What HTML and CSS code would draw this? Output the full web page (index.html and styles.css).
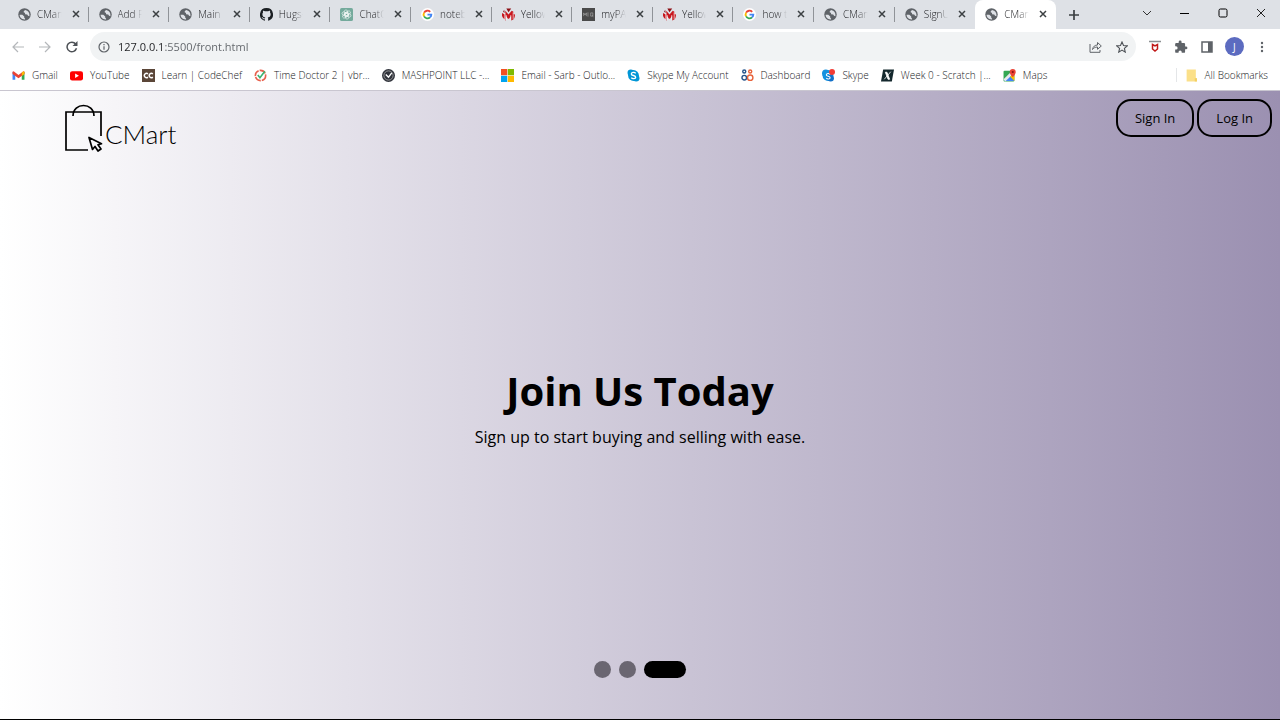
FILE: index.html
```html
<!DOCTYPE html>
<html lang="en">
<head>
    <meta charset="UTF-8">
    <meta name="viewport" content="width=device-width, initial-scale=1.0">
    <title>CMart</title>
    <link rel="stylesheet" href="styles.css">
</head>
<body>
    <!-- Shared icons -->
    <svg class="sprite" aria-hidden="true">
        <symbol id="globe" viewBox="0 0 24 24"><circle cx="12" cy="12" r="11.500" fill="#5f6368"/><path d="M3 12.500h5l3.500 3v2.500l1.500 1.500V21C7 21.500 3 17.500 3 12.500z" fill="#dee1e6"/><path d="M13 3.500c-1 1-3 2-2.500 4.500l2.500 1v2.500l4 .5 1.500 2.500 2.500.500c1-5-2-9.500-5.500-10.500z" fill="#dee1e6"/></symbol>
        <symbol id="close" viewBox="0 0 8 8"><path d="M1 1l6 6M7 1L1 7" stroke="#3c4043" stroke-width="1.500"/></symbol>
        <symbol id="google" viewBox="0 0 24 24"><circle cx="12" cy="12" r="12" fill="#fff"/><g fill="none" stroke-width="3.400"><path d="M17 7a7.200 7.200 0 0 0-11.300 1.600" stroke="#ea4335"/><path d="M5.700 8.600a7.200 7.200 0 0 0 0 6.800" stroke="#fbbc05"/><path d="M5.700 15.400a7.200 7.200 0 0 0 11 2" stroke="#34a853"/><path d="M16.700 17.400a7 7 0 0 0 2.400-5.300H12" stroke="#4285f4"/></g></symbol>
        <symbol id="yellow" viewBox="0 0 24 24"><path d="M0 9l5 3v9C1 19-1 14 0 9z" fill="#c8171e"/><path d="M6 5l6 7 6-7 3 2v14l-4 2V14l-4 6h-2l-4-6v9H6z" fill="#c8171e"/><path d="M21 11l3 1c0 4-1 7-3 9z" fill="#c8171e"/><path d="M8 1l4 7 5-7zM2 7l2-4 1 6z" fill="#8e1015"/><path d="M5.500 9v13M20.500 8v13M8 13v9M16 13v9" stroke="#fff" stroke-width="1"/></symbol>
    </svg>

    <div class="browser">
        <div class="tab-bar">
            <div class="tabs">
                <div class="tab"><svg class="icon"><use href="#globe"/></svg><span class="tab-title">CMart</span><button class="tab-close" aria-label="Close tab"><svg><use href="#close"/></svg></button></div>
                <div class="tab"><svg class="icon"><use href="#globe"/></svg><span class="tab-title">Add Pr</span><button class="tab-close" aria-label="Close tab"><svg><use href="#close"/></svg></button></div>
                <div class="tab"><svg class="icon"><use href="#globe"/></svg><span class="tab-title">Main</span><button class="tab-close" aria-label="Close tab"><svg><use href="#close"/></svg></button></div>
                <div class="tab"><svg class="icon" viewBox="0 0 16 16"><path d="M8 0a8 8 0 0 0-2.530 15.590c.4.070.55-.17.55-.38v-1.490c-2.010.37-2.530-.49-2.690-.94-.09-.23-.48-.94-.82-1.130-.28-.15-.68-.52-.01-.53.63-.01 1.080.58 1.230.82.72 1.210 1.870.87 2.330.66.07-.52.28-.87.51-1.070-1.780-.2-3.640-.89-3.640-3.950 0-.87.31-1.590.82-2.150-.08-.2-.36-1.020.08-2.120 0 0 .67-.21 2.200.82a7.600 7.600 0 0 1 4 0c1.530-1.040 2.200-.82 2.200-.82.44 1.100.16 1.920.08 2.120.51.56.82 1.270.82 2.150 0 3.070-1.870 3.750-3.650 3.950.29.25.54.73.54 1.480v2.200c0 .21.15.46.55.38A8 8 0 0 0 8 0z" fill="#1b1f23"/></svg><span class="tab-title">Hugs-</span><button class="tab-close" aria-label="Close tab"><svg><use href="#close"/></svg></button></div>
                <div class="tab"><svg class="icon" viewBox="0 0 24 24"><rect width="24" height="24" rx="3" fill="#74aa9c"/><g fill="none" stroke="#fff" stroke-width="1"><rect x="8" y="3.500" width="6" height="12" rx="3"/><rect x="8" y="3.500" width="6" height="12" rx="3" transform="rotate(60 12 12)"/><rect x="8" y="3.500" width="6" height="12" rx="3" transform="rotate(120 12 12)"/><rect x="8" y="3.500" width="6" height="12" rx="3" transform="rotate(180 12 12)"/><rect x="8" y="3.500" width="6" height="12" rx="3" transform="rotate(240 12 12)"/><rect x="8" y="3.500" width="6" height="12" rx="3" transform="rotate(300 12 12)"/></g></svg><span class="tab-title">ChatG</span><button class="tab-close" aria-label="Close tab"><svg><use href="#close"/></svg></button></div>
                <div class="tab"><svg class="icon"><use href="#google"/></svg><span class="tab-title">noteb</span><button class="tab-close" aria-label="Close tab"><svg><use href="#close"/></svg></button></div>
                <div class="tab"><svg class="icon"><use href="#yellow"/></svg><span class="tab-title">Yellow</span><button class="tab-close" aria-label="Close tab"><svg><use href="#close"/></svg></button></div>
                <div class="tab"><svg class="icon" viewBox="0 0 24 24"><rect width="24" height="24" fill="#4a4a4a"/><path d="M3 15V9l2.500 4L8 9v6M11 8v8M16 9h4v6h-4zM19 14l2 2" fill="none" stroke="#bbb"/></svg><span class="tab-title">myPA</span><button class="tab-close" aria-label="Close tab"><svg><use href="#close"/></svg></button></div>
                <div class="tab"><svg class="icon"><use href="#yellow"/></svg><span class="tab-title">Yellow</span><button class="tab-close" aria-label="Close tab"><svg><use href="#close"/></svg></button></div>
                <div class="tab"><svg class="icon"><use href="#google"/></svg><span class="tab-title">how t</span><button class="tab-close" aria-label="Close tab"><svg><use href="#close"/></svg></button></div>
                <div class="tab"><svg class="icon"><use href="#globe"/></svg><span class="tab-title">CMart</span><button class="tab-close" aria-label="Close tab"><svg><use href="#close"/></svg></button></div>
                <div class="tab"><svg class="icon"><use href="#globe"/></svg><span class="tab-title">SignU</span><button class="tab-close" aria-label="Close tab"><svg><use href="#close"/></svg></button></div>
                <div class="tab active"><svg class="icon"><use href="#globe"/></svg><span class="tab-title">CMart</span><button class="tab-close" aria-label="Close tab"><svg><use href="#close"/></svg></button></div>
            </div>
            <button class="new-tab" aria-label="New tab"><svg width="12" height="12" viewBox="0 0 12 12"><path d="M6 1v10M1 6h10" stroke="#3c4043" stroke-width="1.700"/></svg></button>
            <div class="window-controls">
                <button aria-label="Search tabs"><svg width="10" height="10" viewBox="0 0 10 10"><path d="M1 3l4 4 4-4" fill="none" stroke="#333"/></svg></button>
                <button aria-label="Minimize"><svg width="10" height="10" viewBox="0 0 10 10"><path d="M0 5.500h9" stroke="#000"/></svg></button>
                <button aria-label="Maximize"><svg width="10" height="10" viewBox="0 0 10 10"><rect x="1" y="1" width="8" height="8" rx="1.500" fill="none" stroke="#000"/></svg></button>
                <button aria-label="Close"><svg width="10" height="10" viewBox="0 0 10 10"><path d="M1 1l8 8M9 1L1 9" stroke="#222"/></svg></button>
            </div>
        </div>

        <div class="toolbar">
            <div class="nav-buttons">
                <button aria-label="Back"><svg width="12" height="12" viewBox="0 0 12 12"><path d="M12 6H1M6 1L1 6l5 5" fill="none" stroke="#b4b7ba" stroke-width="1.200"/></svg></button>
                <button aria-label="Forward"><svg width="12" height="12" viewBox="0 0 12 12"><path d="M0 6h11M6 1l5 5-5 5" fill="none" stroke="#b4b7ba" stroke-width="1.200"/></svg></button>
                <button aria-label="Reload"><svg width="12" height="12" viewBox="0 0 12 12"><path d="M10.500 7.300A4.800 4.800 0 1 1 9.700 3" fill="none" stroke="#4d5156" stroke-width="1.500"/><path d="M11.500 0v5h-5z" fill="#4d5156"/></svg></button>
            </div>
            <div class="address-bar">
                <svg width="12" height="12" viewBox="0 0 12 12"><circle cx="6" cy="6" r="5" fill="none" stroke="#5f6368" stroke-width="1.200"/><path d="M6 5.200v3.500M6 3v1.300" stroke="#5f6368" stroke-width="1.200"/></svg>
                <input type="text" class="url" aria-label="Address" value="127.0.0.1:5500/front.html">
                <button aria-label="Share"><svg width="13" height="12" viewBox="0 0 13 12"><path d="M1 3v8.300h10V9M3.500 8.500C4 5.500 6 4 8.500 4V1.500L12.300 5 8.500 8.300V6C6 6 4.700 7 3.500 8.500z" fill="none" stroke="#5f6368"/></svg></button>
                <button aria-label="Bookmark this page"><svg width="12" height="12" viewBox="0 0 24 24"><path d="M12 2l3 7 7.500.7-5.700 5 1.700 7.500L12 18.200 5.500 22.200l1.700-7.500-5.700-5L9 9z" fill="none" stroke="#4d5156" stroke-width="2.200"/></svg></button>
            </div>
            <div class="extensions">
                <button aria-label="McAfee"><svg width="14" height="14" viewBox="0 0 14 14"><path d="M1 1.500h12" stroke="#8b8f92" stroke-width="1.500"/><path d="M4.500 4.500L7 6l2.500-1.500v4.500L7 11 4.500 9z" fill="#fff" stroke="#c01818" stroke-width="1.500"/></svg></button>
                <button aria-label="Extensions"><svg width="14" height="14" viewBox="0 0 24 24"><path d="M20.500 11H19V7a2 2 0 0 0-2-2h-4V3.500a2.500 2.500 0 0 0-5 0V5H4a2 2 0 0 0-2 2v3.800h1.500a2.700 2.700 0 0 1 0 5.400H2V20a2 2 0 0 0 2 2h3.800v-1.500a2.700 2.700 0 0 1 5.400 0V22H17a2 2 0 0 0 2-2v-4h1.500a2.500 2.500 0 0 0 0-5z" fill="#5f6368"/></svg></button>
                <button aria-label="Side panel"><svg width="12" height="12" viewBox="0 0 12 12"><path d="M1 1h10v10H1z" fill="none" stroke="#5f6368" stroke-width="1.500"/><path d="M7 1h4v10H7z" fill="#5f6368"/></svg></button>
                <button class="profile">J</button>
                <button aria-label="Menu"><svg width="12" height="12" viewBox="0 0 12 12" fill="#5f6368"><circle cx="6" cy="2" r="1.200"/><circle cx="6" cy="6" r="1.200"/><circle cx="6" cy="10" r="1.200"/></svg></button>
            </div>
        </div>

        <nav class="bookmarks">
            <a href="#"><svg class="icon" viewBox="0 0 24 24"><path d="M1 5v15h5V9z" fill="#4285f4"/><path d="M18 9v11h5V5z" fill="#34a853"/><path d="M1 5l2-1 9 7 9-7 2 1v4l-11 8L1 9z" fill="#ea4335"/><path d="M18 7l3-3 2 1v4l-5 4z" fill="#fbbc04"/></svg>Gmail</a>
            <a href="#"><svg class="icon" viewBox="0 0 24 24"><rect y="4" width="24" height="17" rx="4" fill="#f00"/><path d="M9.500 8.500v8l7-4z" fill="#fff"/></svg>YouTube</a>
            <a href="#"><svg class="icon" viewBox="0 0 24 24"><rect width="24" height="24" fill="#5b4638"/><path d="M11 9a4 4 0 1 0 0 6M20 9a4 4 0 1 0 0 6" fill="none" stroke="#fff" stroke-width="2.600"/></svg>Learn | CodeChef</a>
            <a href="#"><svg class="icon" viewBox="0 0 24 24"><circle cx="12" cy="12" r="9.500" fill="none" stroke="#e8604c" stroke-width="3" stroke-dasharray="12 2"/><path d="M7 11l4 5 9-12" fill="none" stroke="#3cb371" stroke-width="3"/></svg>Time Doctor 2 | vbr...</a>
            <a href="#"><svg class="icon" viewBox="0 0 24 24"><circle cx="12" cy="12" r="12" fill="#30333b"/><circle cx="12" cy="12" r="8.500" fill="none" stroke="#aaa" stroke-width="1.500"/><path d="M7 10l5 5 6-8" fill="none" stroke="#fff" stroke-width="2.500"/></svg>MASHPOINT LLC -...</a>
            <a href="#"><svg class="icon" viewBox="0 0 24 24"><path d="M0 0h11.500v11.500H0z" fill="#f25022"/><path d="M12.500 0H24v11.500H12.500z" fill="#7fba00"/><path d="M0 12.500h11.500V24H0z" fill="#00a4ef"/><path d="M12.500 12.500H24V24H12.500z" fill="#ffb900"/></svg>Email - Sarb - Outlo...</a>
            <a href="#"><svg class="icon" viewBox="0 0 24 24"><circle cx="12" cy="12" r="10" fill="#0096d6"/><circle cx="7" cy="7" r="6" fill="#0096d6"/><circle cx="17" cy="17" r="6" fill="#0096d6"/><path d="M16 8c-2-3-8-2-8 1 0 4 8 2 8 6 0 3-6 4-8 1" fill="none" stroke="#fff" stroke-width="2.500"/></svg>Skype My Account</a>
            <a href="#"><svg class="icon" viewBox="0 0 24 24" fill="none" stroke-width="2.600"><g stroke="#27558c"><circle cx="6" cy="4.500" r="2.800"/><circle cx="6" cy="16" r="4.200"/></g><g stroke="#e8623a"><circle cx="17" cy="4.500" r="2.800"/><circle cx="17" cy="16" r="5"/></g></svg>Dashboard</a>
            <a href="#"><svg class="icon" viewBox="0 0 24 24"><circle cx="11" cy="12" r="10" fill="#1592df"/><circle cx="7" cy="8" r="7" fill="#1592df"/><circle cx="16" cy="17" r="6" fill="#1270c8"/><path d="M15 10c-2-3-7-2-7 1 0 3 7 2 7 5s-5 3-7 1" fill="none" stroke="#fff" stroke-width="2"/><circle cx="18.500" cy="5.500" r="5.500" fill="#f23c34"/></svg>Skype</a>
            <a href="#"><svg class="icon" viewBox="0 0 24 24"><path d="M4 1h20l-4 22H0z" fill="#14282d"/><path d="M8 6h3l5 13h-3zM18 5L6 19" fill="#fff" stroke="#fff" stroke-width="1.500"/></svg>Week 0 - Scratch |...</a>
            <a href="#"><svg class="icon" viewBox="0 0 24 24"><rect x="1" y="3" width="20" height="20" rx="2" fill="#34a853"/><path d="M2 22l10-10 9 10z" fill="#4285f4"/><path d="M1 19L17 3h4v4L4 23z" fill="#e5e8eb"/><path d="M13 14l8 8V9z" fill="#fbbc04"/><path d="M18 0a5.500 5.500 0 0 1 5.500 5.500C23.500 10 18 15 18 15s-5.500-5-5.500-9.500A5.500 5.500 0 0 1 18 0z" fill="#ea4335"/><circle cx="18" cy="5.500" r="2" fill="#811"/></svg>Maps</a>
            <a href="#" class="all-bookmarks"><svg class="icon" viewBox="0 0 24 24"><path d="M3 1h17v16h2v6H3z" fill="#fbe089"/><path d="M18 17h4v6h-4z" fill="#f3cf62"/></svg>All Bookmarks</a>
        </nav>
    </div>

    <main class="page">
        <header class="header">
            <a href="#" class="logo">
                <svg width="40" height="50" viewBox="0 0 40 50" fill="none" stroke="#000" stroke-width="1.700"><path d="M24 47H2V9h35V33"/><path d="M9 13C9 -1 30 -1 30 13"/><path d="M25 34.500l3.500 12 2.500-3 3 4.500 3-2-3-4.200 3.500-1z" stroke-linejoin="round"/></svg>
                <span>CMart</span>
            </a>
            <div class="auth-buttons">
                <button class="auth-button">Sign In</button>
                <button class="auth-button">Log In</button>
            </div>
        </header>

        <section class="slide">
            <h1>Join Us Today</h1>
            <p>Sign up to start buying and selling with ease.</p>
        </section>

        <div class="dots">
            <button class="dot" aria-label="Slide 1"></button>
            <button class="dot" aria-label="Slide 2"></button>
            <button class="dot active" aria-label="Slide 3"></button>
        </div>
    </main>
</body>
</html>
```

FILE: styles.css
```css
* {
    box-sizing: border-box;
}
body {
    margin: 0;
    min-height: 100vh;
    display: flex;
    flex-direction: column;
    font-family: "Open Sans", sans-serif;
    color: #000;
}
button {
    display: flex;
    align-items: center;
    justify-content: center;
    padding: 0;
    border: none;
    background: none;
    font-family: inherit;
    cursor: pointer;
}
a {
    color: inherit;
    text-decoration: none;
}
.sprite {
    display: none;
}
.icon {
    width: 13px;
    height: 13px;
    flex: none;
}

/* Browser window */
.browser {
    background-color: #fff;
    border-bottom: 1px solid #c9c6d0;
    font-size: 10px;
    font-weight: 300;
    color: #202124;
}
.tab-bar {
    display: flex;
    height: 29px;
    padding-left: 8px;
    background-color: #dee1e6;
}
.tabs {
    display: flex;
    flex: 1;
    min-width: 0;
}
.tab {
    display: flex;
    flex: 1;
    align-items: center;
    min-width: 0;
    padding: 0 9px 1px 10px;
    background: linear-gradient(#909398, #909398) right 7px / 1px 15px no-repeat;
}
.tab:nth-last-child(2) {
    background: none;
}
.tab.active {
    background: #fff;
    border-radius: 8px 8px 0 0;
}
.tab-title {
    flex: 1;
    min-width: 0;
    margin-left: 6px;
    overflow: hidden;
    white-space: nowrap;
    mask-image: linear-gradient(90deg, #000 60%, transparent);
}
.tab-close {
    width: 8px;
    margin-left: 10px;
}
.tab-close svg {
    width: 8px;
    height: 8px;
}
.new-tab {
    width: 36px;
}
.window-controls {
    display: flex;
    width: 188px;
    padding: 0 0 4px 36px;
}
.window-controls button {
    flex: 1;
}
.toolbar {
    display: flex;
    align-items: center;
    padding: 3px 0 0 12px;
}
.nav-buttons {
    display: flex;
    gap: 15px;
    margin-right: 12px;
}
.address-bar {
    display: flex;
    flex: 1;
    align-items: center;
    gap: 14px;
    height: 29px;
    padding: 0 8px;
    border-radius: 15px;
    background-color: #f1f3f4;
}
.url {
    flex: 1;
    min-width: 0;
    margin-left: -6px;
    padding: 0;
    border: none;
    outline: none;
    font-family: inherit;
    font-size: 11px;
    color: transparent;
    background: linear-gradient(90deg, #202124 47px, #5f6368 47px);
    background-clip: text;
}
.extensions {
    display: flex;
    align-items: center;
    justify-content: space-between;
    width: 144px;
    padding: 0 12px;
}
.profile {
    width: 19px;
    height: 19px;
    border-radius: 50%;
    background-color: #5c6bc0;
    color: #fff;
    font-size: 10px;
}
.bookmarks {
    display: flex;
    align-items: center;
    gap: 12px;
    height: 29px;
    padding: 0 12px 1px;
    white-space: nowrap;
}
.bookmarks a {
    display: flex;
    align-items: center;
    gap: 7px;
}
.bookmarks .all-bookmarks {
    margin-left: auto;
    padding-left: 8px;
    border-left: 1px solid #e4e6e8;
}

/* Landing page */
.page {
    display: flex;
    flex: 1;
    flex-direction: column;
    border-bottom: 1px solid #000;
    background: linear-gradient(to right, #fff, #9b90b1);
}
.header {
    display: flex;
    align-items: flex-start;
    justify-content: space-between;
    padding: 8px 8px 0 64px;
}
.logo {
    display: flex;
    align-items: center;
    gap: 1px;
    padding-top: 4px;
    font-family: Lato, sans-serif;
    font-size: 26px;
    font-weight: 300;
}
.logo span {
    padding-top: 12px;
}
.auth-buttons {
    display: flex;
    gap: 3px;
}
.auth-button {
    height: 38px;
    padding: 0 17px;
    border: 2px solid #000;
    border-radius: 15px;
    font-size: 13px;
}
.slide {
    display: flex;
    flex: 1;
    flex-direction: column;
    align-items: center;
    justify-content: center;
    text-align: center;
}
.slide h1 {
    margin: 0;
    font-size: 40px;
    line-height: 56px;
}
.slide p {
    margin: 6px 0 0;
    font-size: 16px;
    line-height: 24px;
}
.dots {
    display: flex;
    justify-content: center;
    gap: 8px;
    padding: 2px 0 41px;
}
.dot {
    width: 17px;
    height: 17px;
    border-radius: 9px;
    background-color: #6a6671;
}
.dot.active {
    width: 42px;
    background-color: #000;
}
```
